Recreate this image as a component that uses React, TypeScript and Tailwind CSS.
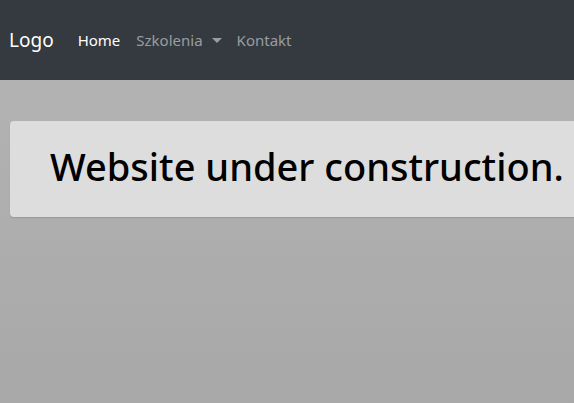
export default function App() {
  return (
    <div className="h-[403px] w-full overflow-hidden flex flex-col bg-gradient-to-b from-[#b5b5b5] to-[#a8a8a8]" style={{ fontFamily: '"Noto Sans", "Open Sans", sans-serif' }}>
      <nav className="h-[80px] shrink-0 bg-[#343a40] flex items-center pl-[9px]">
        <span className="text-[19px] text-white mr-[24px] leading-none">Logo</span>
        <a className="text-[15px] text-white leading-none">Home</a>
        <a className="ml-[16px] text-[15px] text-white/50 leading-none flex items-center">
          Szkolenia
          <span className="ml-[9px] inline-block w-0 h-0 border-l-[5px] border-r-[5px] border-t-[5px] border-l-transparent border-r-transparent border-t-white/50" />
        </a>
        <a className="ml-[15px] text-[15px] text-white/50 leading-none">Kontakt</a>
      </nav>
      <div className="ml-[10px] mt-[41px] w-[700px] h-[96px] shrink-0 bg-[#dddddd] rounded-[4px] shadow-[0_1px_1px_rgba(0,0,0,0.12)] flex items-center pl-[40px] pb-[6px]">
        <h1 className="text-[38px] font-medium text-black leading-none whitespace-nowrap">Website under construction.</h1>
      </div>
    </div>
  );
}
